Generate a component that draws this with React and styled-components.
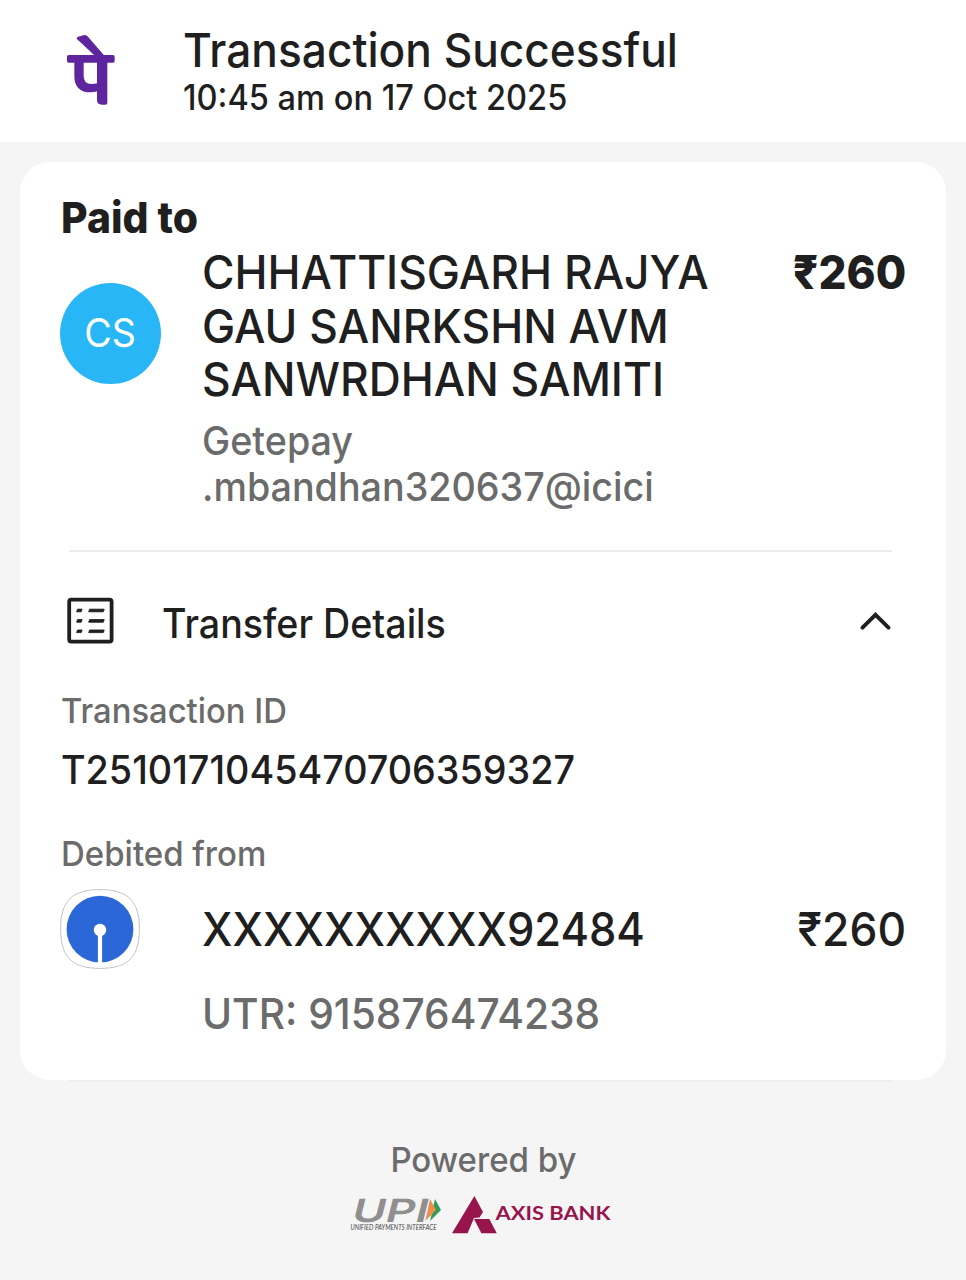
import React from 'react';
import styled, { createGlobalStyle, css } from 'styled-components';

const GlobalStyle = createGlobalStyle`
  * {
    box-sizing: border-box;
  }

  body {
    margin: 0;
    background: #f5f5f5;
    color: #1f1f1f;
    font-family: Inter, sans-serif;
    font-weight: 500;
  }
`;

// Slightly narrowed Inter, used for all the receipt text
const narrow = (scale, origin = 'left') => css`
  transform: scaleX(${scale});
  transform-origin: ${origin} top;
  white-space: nowrap;
`;

const Page = styled.div`
  display: flex;
  flex-direction: column;
  min-height: 1280px;
  overflow: hidden;
  background: #f5f5f5;
`;

const Header = styled.header`
  display: flex;
  height: 142px;
  padding: 23px 0 0 66px;
  background: #fff;
`;

const HeaderLogo = styled.svg`
  width: 50px;
  height: 72px;
  margin: 10.5px 67.3px 0 0;
`;

const Title = styled.h1`
  margin: 0;
  font-size: 46.7px;
  font-weight: 500;
  line-height: 55px;
  ${narrow(0.947)}
`;

const Timestamp = styled.p`
  margin: -1px 0 0;
  font-size: 34.8px;
  line-height: 40px;
  ${narrow(0.936)}
`;

const Card = styled.main`
  height: 918px;
  margin: 20px 20px 0;
  padding: 29px 40px 0;
  border-radius: 30px;
  background: #fff;
`;

const SectionTitle = styled.h2`
  margin: 0 0 0 0.5px;
  font-size: 43px;
  font-weight: 800;
  line-height: 52px;
  ${narrow(0.95)}
`;

const PayeeRow = styled.div`
  display: flex;
  margin-top: 3px;
`;

const Avatar = styled.div`
  display: flex;
  align-items: center;
  justify-content: center;
  flex: none;
  width: 101px;
  height: 101px;
  margin: 36.5px 40.5px 0 0;
  border-radius: 50%;
  background: #29b6f6;
  color: #fff;
  font-size: 39.5px;
  font-weight: 400;
`;

const Initials = styled.span`
  ${narrow(0.955, 'center')}
`;

const Payee = styled.div`
  flex: 1;
`;

const PayeeName = styled.div`
  width: 550px;
  font-size: 46.7px;
  line-height: 53.7px;
  ${narrow(0.95)}
  white-space: normal;
`;

const PayeeId = styled.div`
  width: 490px;
  margin-top: 10.5px;
  color: #6b6b6b;
  font-size: 40px;
  line-height: 46.5px;
  ${narrow(0.942)}
  white-space: normal;
`;

const Amount = styled.div`
  font-size: 46.7px;
  font-weight: ${props => props.$bold ? 800 : 500};
  line-height: ${props => props.$bold ? '53.7px' : '56px'};
  ${props => narrow(props.$bold ? 0.943 : 0.951, 'right')}
`;

const Divider = styled.hr`
  width: ${props => props.$width || '823px'};
  height: 2px;
  margin: ${props => props.$margin};
  border: 0;
  background: #ededed;
`;

const DetailsHeader = styled.div`
  display: flex;
  height: 48px;
  margin-top: 45px;
  padding: 0 15px 0 7px;
`;

const ListIcon = styled.svg`
  width: 47px;
  height: 47px;
`;

const DetailsTitle = styled.h3`
  flex: 1;
  margin: 3px 0 0 48.3px;
  font-size: 40.5px;
  font-weight: 500;
  line-height: 48px;
  ${narrow(0.929)}
`;

const Chevron = styled.svg`
  width: 31px;
  height: 19px;
  margin-top: 14px;
`;

const Label = styled.div`
  margin: ${props => props.$top} 0 0 0.5px;
  color: #6b6b6b;
  font-size: 34.6px;
  line-height: 42px;
  ${props => narrow(props.$scale, props.$origin)}
`;

const TransactionId = styled.div`
  margin: 15px 0 0 0.5px;
  font-size: 40px;
  line-height: 48px;
  ${narrow(0.943)}
`;

const AccountRow = styled.div`
  display: flex;
  margin-top: 15px;
`;

const BankLogo = styled.svg`
  width: 80px;
  height: 80px;
  margin-right: 61.7px;
`;

const Account = styled.div`
  flex: 1;
  margin-top: 12px;
  font-size: 46.7px;
  line-height: 56px;
  ${narrow(0.932)}
`;

const AccountAmount = styled(Amount)`
  margin-top: 12px;
`;

const Utr = styled.div`
  margin: 18px 0 0 141.5px;
  color: #6b6b6b;
  font-size: 43px;
  line-height: 52px;
  ${narrow(0.946)}
`;

const Footer = styled.footer`
  display: flex;
  flex-direction: column;
  align-items: center;
`;

const Partners = styled.div`
  display: flex;
  gap: 3px;
  margin: 6px 9px 0 0;
`;

const PhonePeMark = () => (
  <HeaderLogo viewBox="78 40 150 216" fill="#5f259f">
    <path d="M112 49L133 43Q138 43 142 46L192 104H163L110 54Z" />
    <rect x="81" y="103" width="143" height="23" rx="5" />
    <path d="M103 118V165Q103 215 152 215Q163 215 172 212V188Q165 190 154 190Q131 190 131 165V118Z" />
    <path d="M171 110H202V246Q202 252 196 252H186Q171 252 171 238Z" />
  </HeaderLogo>
);

const SbiMark = () => (
  <BankLogo viewBox="0 0 80 80">
    <path
      d="M40 .6C68 .6 79.4 12 79.4 40S68 79.4 40 79.4.6 68 .6 40 12 .6 40 .6Z"
      fill="#fff"
      stroke="#c4c4c4"
    />
    <circle cx="40" cy="40.2" r="33.4" fill="#2c67d8" />
    <circle cx="40" cy="41" r="6.2" fill="#fff" />
    <rect x="37.9" y="43" width="4.2" height="32" fill="#fff" />
  </BankLogo>
);

const UpiLogo = () => (
  <svg width="99" height="50" viewBox="-4 -10 99 50">
    <text
      x="6.5"
      y="25.5"
      transform="skewX(-14)"
      textLength="76"
      lengthAdjust="spacingAndGlyphs"
      fontSize="32"
      fontWeight="600"
      fill="#8f8f8f"
    >
      UPI
    </text>
    <path d="M85 3L91 14 80 25Z" fill="#2f9e5b" />
    <path d="M80 3L86 14 75.3 25Z" fill="#f08c4a" />
    <text
      x="0.5"
      y="34"
      textLength="86"
      lengthAdjust="spacingAndGlyphs"
      fontFamily="Lato, sans-serif"
      fontSize="6.8"
      fontStyle="italic"
      fontWeight="400"
      fill="#444"
    >
      UNIFIED PAYMENTS INTERFACE
    </text>
  </svg>
);

const AxisLogo = () => (
  <svg width="163" height="50" viewBox="-4 -10 163 50" fill="#97144d">
    <path d="M22.4 0L31 16 27.5 21.5 22 22 15.6 37.3H0Z" />
    <path d="M22 23H37.3L44.8 37.3H29.4Z" />
    <text
      x="43.5"
      y="23.8"
      textLength="115"
      lengthAdjust="spacingAndGlyphs"
      fontFamily="Lato, sans-serif"
      fontSize="19.8"
      fontWeight="700"
    >
      AXIS BANK
    </text>
  </svg>
);

const App = () => (
  <Page>
    <GlobalStyle />
    <Header>
      <PhonePeMark />
      <div>
        <Title>Transaction Successful</Title>
        <Timestamp>10:45 am on 17 Oct 2025</Timestamp>
      </div>
    </Header>

    <Card>
      <SectionTitle>Paid to</SectionTitle>
      <PayeeRow>
        <Avatar>
          <Initials>CS</Initials>
        </Avatar>
        <Payee>
          <PayeeName>CHHATTISGARH RAJYA GAU SANRKSHN AVM SANWRDHAN SAMITI</PayeeName>
          <PayeeId>Getepay .mbandhan320637@icici</PayeeId>
        </Payee>
        <Amount $bold>₹260</Amount>
      </PayeeRow>
      <Divider $margin="39.5px 0 0 9px" />

      <DetailsHeader>
        <ListIcon viewBox="0 0 47 47" fill="none" stroke="#1f1f1f">
          <rect x="2.2" y="2.6" width="42.4" height="42" rx="2" strokeWidth="3.8" />
          <path
            d="M10.5 12.2h4.6l-.9 2.6h-4.6zM22.6 12.2h14.6l-.9 2.6H21.7zM10.5 22.6h4.6l-.9 2.6h-4.6zM22.6 22.6h14.6l-.9 2.6H21.7zM10.5 33h4.6l-.9 2.6h-4.6zM22.6 33h14.6l-.9 2.6H21.7z"
            fill="#1f1f1f"
            strokeWidth=".9"
          />
        </ListIcon>
        <DetailsTitle>Transfer Details</DetailsTitle>
        <Chevron viewBox="0 0 31 19" fill="none" stroke="#1f1f1f" strokeWidth="3.8" strokeLinecap="round">
          <path d="M2.5 16.7L15.5 3.8 28.5 16.7" />
        </Chevron>
      </DetailsHeader>

      <Label $top="44px" $scale={0.948}>Transaction ID</Label>
      <TransactionId>T2510171045470706359327</TransactionId>

      <Label $top="37.5px" $scale={0.954}>Debited from</Label>
      <AccountRow>
        <SbiMark />
        <Account>XXXXXXXXXX92484</Account>
        <AccountAmount>₹260</AccountAmount>
      </AccountRow>
      <Utr>UTR: 915876474238</Utr>
    </Card>

    <Divider $margin="0 0 0 70px" $width="822px" />
    <Footer>
      <Label $top="55.5px" $scale={0.955} $origin="center">Powered by</Label>
      <Partners>
        <UpiLogo />
        <AxisLogo />
      </Partners>
    </Footer>
  </Page>
);

export default App;
